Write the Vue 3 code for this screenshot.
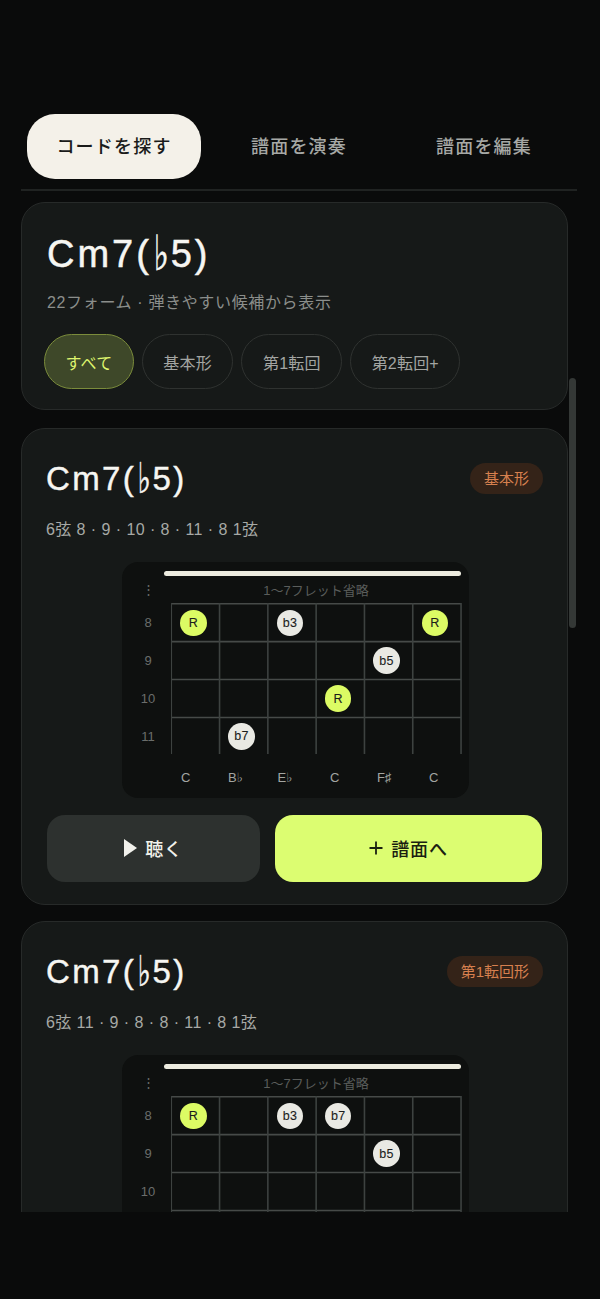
<script setup>
const tabs = ['コードを探す', '譜面を演奏', '譜面を編集']
const chips = ['すべて', '基本形', '第1転回', '第2転回+']
const strings = ['C', 'B♭', 'E♭', 'C', 'F♯', 'C']
const frets = [8, 9, 10, 11]
const forms = [
  {
    badge: '基本形',
    frets: '6弦 8 · 9 · 10 · 8 · 11 · 8 1弦',
    dots: [
      { c: 0, r: 0, t: 'R' }, { c: 2, r: 0, t: 'b3' }, { c: 5, r: 0, t: 'R' },
      { c: 4, r: 1, t: 'b5' }, { c: 3, r: 2, t: 'R' }, { c: 1, r: 3, t: 'b7' }
    ]
  },
  {
    badge: '第1転回形',
    frets: '6弦 11 · 9 · 8 · 8 · 11 · 8 1弦',
    dots: [
      { c: 0, r: 0, t: 'R' }, { c: 2, r: 0, t: 'b3' }, { c: 3, r: 0, t: 'b7' },
      { c: 4, r: 1, t: 'b5' }
    ]
  }
]
const dotStyle = (d) => ({
  left: `${9 + d.c * 48.3}px`,
  top: `${7 + d.r * 37.9}px`
})
</script>

<template>
  <div class="app">
    <nav class="tabs">
      <button v-for="(t, i) in tabs" :key="t" class="tab" :class="{ on: i === 0 }"><span class="tab-label">{{ t }}</span></button>
    </nav>
    <main class="scroller">
      <section class="card hero">
        <h1 class="hero-title">Cm7(<span class="flat">♭</span>5)</h1>
        <p class="hero-sub">22フォーム · 弾きやすい候補から表示</p>
        <div class="chips">
          <button v-for="(c, i) in chips" :key="c" class="chip" :class="{ on: i === 0 }">{{ c }}</button>
        </div>
      </section>
      <article v-for="f in forms" :key="f.badge" class="card form">
        <header class="form-head">
          <h2 class="form-title">Cm7(<span class="flat">♭</span>5)</h2>
          <span class="badge">{{ f.badge }}</span>
        </header>
        <p class="form-sub">{{ f.frets }}</p>
        <div class="board">
          <div class="nut"></div>
          <div class="omit">
            <span class="fret-no">⋮</span>
            <span class="omit-text">1〜7フレット省略</span>
          </div>
          <div class="neck">
            <div class="fret-col">
              <span v-for="n in frets" :key="n" class="fret-no">{{ n }}</span>
            </div>
            <div class="grid">
              <svg class="lines" width="291" height="151" viewBox="0 0 291 151">
                <path v-for="r in 4" :key="'h' + r" :d="`M0 ${0.75 + (r - 1) * 37.9}H290`" />
                <path v-for="c in 7" :key="'v' + c" class="v" :d="`M${0.25 + (c - 1) * 48.3} 0V151`" />
              </svg>
              <span
                v-for="d in f.dots"
                :key="d.c + '-' + d.r"
                class="dot"
                :class="{ root: d.t === 'R' }"
                :style="dotStyle(d)"
              >{{ d.t }}</span>
            </div>
          </div>
          <div class="strings">
            <span v-for="(s, i) in strings" :key="i" class="string">{{ s }}</span>
          </div>
        </div>
        <div class="actions">
          <button class="btn listen"><span class="play"></span>聴く</button>
          <button class="btn add">
            <svg class="plus" width="14" height="14" viewBox="0 0 14 14"><path d="M7 0.5V13.5M0.5 7H13.5" /></svg>
            譜面へ
          </button>
        </div>
      </article>
    </main>
    <div class="scrollbar"></div>
  </div>
</template>

<style scoped>
.app {
  position: relative;
  height: 1299px;
  background: #0a0b0b;
  font-family: "Liberation Sans", "Noto Sans CJK JP", sans-serif;
  overflow: hidden;
}
button {
  font-family: inherit;
  border: 0;
  padding: 0;
}
h1, h2, p { margin: 0; }

.tabs {
  display: flex;
  gap: 11px;
  margin: 0 23px 0 21px;
  padding: 114px 0 10px 6px;
  border-bottom: 2px solid #202322;
}
.tab {
  width: 174px;
  height: 65px;
  padding-bottom: 3px;
  border-radius: 28px;
  background: transparent;
  color: #a6a8a5;
  font-size: 18px;
  font-weight: 500;
  letter-spacing: 1.2px;
}
.tab.on {
  background: #f4f1e9;
  color: #1a1b1a;
}

.scroller {
  display: flex;
  flex-direction: column;
  height: 1021px;
  padding: 11px 32px 0 21px;
  box-sizing: border-box;
  overflow: hidden;
}
.card {
  flex: none;
  box-sizing: border-box;
  background: #161918;
  border: 1.5px solid #272a29;
  border-radius: 24px;
}
.hero {
  height: 208px;
  padding: 27px 22px 0;
  margin-bottom: 18px;
}
.hero-title {
  padding-left: 3px;
  font-size: 38px;
  line-height: 48px;
  font-weight: 400;
  color: #f6f6f2;
  letter-spacing: 3px;
  -webkit-text-stroke: 0.5px #f6f6f2;
}
.flat {
  display: inline-block;
  font-family: "DejaVu Sans", sans-serif;
  font-size: 1.05em;
  font-weight: 700;
  line-height: 0;
  letter-spacing: 0;
  transform: scale(0.82, 1.22);
}
.hero-sub {
  margin-top: 13px;
  padding-left: 3px;
  font-size: 16px;
  line-height: 24px;
  color: #8b8e8b;
  letter-spacing: 0.65px;
}
.chips {
  display: flex;
  gap: 8px;
  margin-top: 19px;
}
.chip {
  height: 55px;
  padding: 0 20.5px;
  box-sizing: border-box;
  border-radius: 28px;
  border: 1.5px solid #2f3230;
  background: transparent;
  color: #a3a5a2;
  font-size: 16px;
  letter-spacing: 0.2px;
}
.chip.on {
  background: #3e4829;
  border-color: #7b8c3b;
  color: #dff56e;
}

.form {
  height: 477px;
  padding: 0 24px;
  margin-bottom: 16px;
}
.form-head {
  display: flex;
  align-items: center;
  justify-content: space-between;
  height: 31px;
  margin-top: 34px;
}
.form-title {
  font-size: 33px;
  line-height: 40px;
  font-weight: 400;
  color: #f6f6f2;
  letter-spacing: 2.4px;
  -webkit-text-stroke: 0.4px #f6f6f2;
}
.badge {
  height: 31px;
  line-height: 31px;
  padding: 0 14px;
  border-radius: 16px;
  background: #342318;
  color: #d7804f;
  font-size: 15px;
}
.form-sub {
  margin: 24px 0 0;
  font-size: 16px;
  line-height: 24px;
  color: #a7a9a6;
  letter-spacing: 0.35px;
  word-spacing: 0.2px;
}

.board {
  width: 347px;
  height: 236px;
  margin: 20px 0 0 76px;
  padding-top: 9px;
  box-sizing: border-box;
  background: #0e100f;
  border-radius: 16px;
}
.nut {
  width: 297px;
  height: 5px;
  margin-left: 42px;
  border-radius: 3px;
  background: #ecebdf;
}
.omit {
  display: flex;
  align-items: center;
  height: 26.5px;
}
.omit .fret-no { height: auto; }
.omit-text {
  width: 290px;
  text-align: center;
  font-size: 13px;
  color: #5a5d5b;
}
.neck { display: flex; }
.fret-col {
  display: flex;
  flex-direction: column;
  padding-top: 1px;
}
.fret-no {
  width: 49px;
  height: 37.9px;
  padding-left: 3px;
  box-sizing: border-box;
  display: flex;
  align-items: center;
  justify-content: center;
  font-size: 13px;
  color: #6a6d6b;
}
.grid {
  position: relative;
  width: 291px;
  height: 151px;
}
.lines {
  display: block;
  fill: none;
  stroke: #464a48;
  stroke-width: 1.6;
}
.lines .v { stroke: #3d4240; }
.dot {
  position: absolute;
  width: 26.6px;
  height: 26.6px;
  border-radius: 50%;
  display: flex;
  align-items: center;
  justify-content: center;
  background: #e9e9e3;
  color: #1b1c1b;
  font-size: 12.5px;
  font-weight: 500;
  letter-spacing: 0.3px;
  -webkit-text-stroke: 0.1px #1b1c1b;
}
.dot.root { background: #dcfb64; }
.strings {
  display: flex;
  margin: 11.5px 0 0 39px;
}
.string {
  width: 49.6px;
  text-align: center;
  font-family: "Liberation Sans", "DejaVu Sans", sans-serif;
  font-size: 13px;
  line-height: 22px;
  color: #a2a5a2;
}

.actions {
  display: flex;
  gap: 15px;
  margin-top: 17px;
  padding-left: 1px;
}
.btn {
  height: 67px;
  padding-bottom: 1px;
  border-radius: 18px;
  font-size: 18px;
  font-weight: 500;
  letter-spacing: 0.8px;
  display: flex;
  align-items: center;
  justify-content: center;
  gap: 8px;
}
.listen {
  width: 213px;
  background: #2d312f;
  color: #f1f1ec;
}
.play {
  width: 0;
  height: 0;
  border-left: 13px solid #f1f1ec;
  border-top: 9px solid transparent;
  border-bottom: 9px solid transparent;
}
.add {
  width: 267px;
  background: #dcfd71;
  color: #1a2010;
}
.plus {
  fill: none;
  stroke: #1a2010;
  stroke-width: 1.8;
}

.scrollbar {
  position: absolute;
  left: 569px;
  top: 378px;
  width: 7px;
  height: 250px;
  border-radius: 4px;
  background: #343836;
}
</style>
